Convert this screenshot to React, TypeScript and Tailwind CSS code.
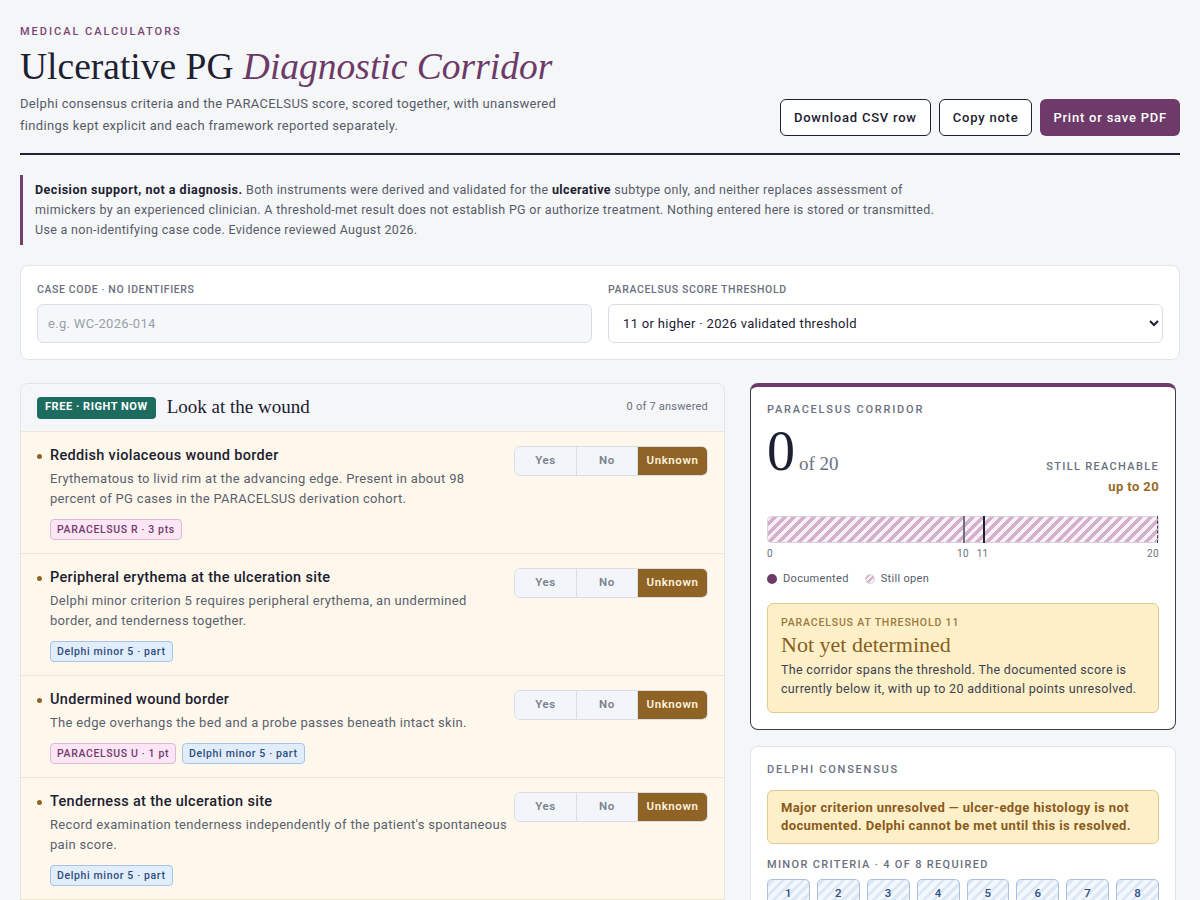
import React, { useState } from 'react';

type Answer = 'yes' | 'no' | 'unknown';

interface Tag {
  label: string;
  kind: 'para' | 'delphi';
}

interface Finding {
  id: string;
  title: string;
  desc: string;
  tags: Tag[];
}

const findings: Finding[] = [
  {
    id: 'border',
    title: 'Reddish violaceous wound border',
    desc: 'Erythematous to livid rim at the advancing edge. Present in about 98 percent of PG cases in the PARACELSUS derivation cohort.',
    tags: [{ label: 'PARACELSUS R · 3 pts', kind: 'para' }],
  },
  {
    id: 'erythema',
    title: 'Peripheral erythema at the ulceration site',
    desc: 'Delphi minor criterion 5 requires peripheral erythema, an undermined border, and tenderness together.',
    tags: [{ label: 'Delphi minor 5 · part', kind: 'delphi' }],
  },
  {
    id: 'undermined',
    title: 'Undermined wound border',
    desc: 'The edge overhangs the bed and a probe passes beneath intact skin.',
    tags: [
      { label: 'PARACELSUS U · 1 pt', kind: 'para' },
      { label: 'Delphi minor 5 · part', kind: 'delphi' },
    ],
  },
  {
    id: 'tenderness',
    title: 'Tenderness at the ulceration site',
    desc: "Record examination tenderness independently of the patient's spontaneous pain score.",
    tags: [{ label: 'Delphi minor 5 · part', kind: 'delphi' }],
  },
  {
    id: 'multiple',
    title: 'Multiple ulcerations',
    desc: 'At least two separate ulcers, on any site, at the time of assessment.',
    tags: [{ label: 'Delphi minor 7', kind: 'delphi' }],
  },
  {
    id: 'cribriform',
    title: 'Cribriform or wrinkled-paper scars',
    desc: 'Scarring at sites of healed ulcers, typically with a sieve-like pattern.',
    tags: [{ label: 'Delphi minor 8', kind: 'delphi' }],
  },
  {
    id: 'papule',
    title: 'Began as a papule, pustule or vesicle',
    desc: 'Ask how the lesion first looked before it broke down.',
    tags: [{ label: 'Delphi minor 2', kind: 'delphi' }],
  },
];

const sans = "font-['Roboto',sans-serif]";
const serif = "font-['Liberation_Serif',serif]";

const TagChip: React.FC<{ tag: Tag }> = ({ tag }) => (
  <span
    className={`inline-flex h-[21px] items-center rounded-[4px] border px-[6px] text-[10.5px] font-medium tracking-[0.06em] ${
      tag.kind === 'para'
        ? 'border-[#e2b6d8] bg-[#fbe6f6] text-[#763a6c]'
        : 'border-[#a9c3e6] bg-[#e2edfb] text-[#2c4c7e]'
    }`}
  >
    {tag.label}
  </span>
);

const Segmented: React.FC<{ value: Answer; onChange: (a: Answer) => void }> = ({ value, onChange }) => {
  const opts: { key: Answer; label: string; w: string }[] = [
    { key: 'yes', label: 'Yes', w: 'w-[61px]' },
    { key: 'no', label: 'No', w: 'w-[61px]' },
    { key: 'unknown', label: 'Unknown', w: 'w-[70px]' },
  ];
  return (
    <div className="flex h-[30px] shrink-0 overflow-hidden rounded-[6px] border border-[#d9dee6]">
      {opts.map((o, i) => (
        <button
          key={o.key}
          onClick={() => onChange(o.key)}
          className={`${o.w} text-[11.5px] font-semibold tracking-[0.05em] ${i > 0 ? 'border-l border-[#d9dee6]' : ''} ${
            value === o.key ? 'bg-[#8e6325] text-[#fdf1dc]' : 'bg-[#f2f5f9] text-[#7b818d]'
          }`}
        >
          {o.label}
        </button>
      ))}
    </div>
  );
};

export default function App() {
  const [answers, setAnswers] = useState<Record<string, Answer>>(
    Object.fromEntries(findings.map((f) => [f.id, 'unknown' as Answer]))
  );
  const answered = Object.values(answers).filter((a) => a !== 'unknown').length;

  return (
    <div className={`min-h-screen bg-[#f5f6f8] px-5 pb-10 pt-6 tracking-[0.02em] text-[#1c2030] ${sans}`}>
      {/* Header */}
      <header className="flex items-end justify-between border-b-2 border-[#1f2333] pb-4">
        <div>
          <div className="text-[11px] font-medium uppercase leading-4 tracking-[0.18em] text-[#7a4474]">
            Medical calculators
          </div>
          <h1 className={`mt-[3px] text-[37.5px] leading-[48px] tracking-normal text-[#1c2030] ${serif}`}>
            Ulcerative PG <em className="text-[#6c3a67]">Diagnostic Corridor</em>
          </h1>
          <p className="mt-[2px] max-w-[575px] text-[13px] leading-[22px] text-[#555b68]">
            Delphi consensus criteria and the PARACELSUS score, scored together, with unanswered findings kept
            explicit and each framework reported separately.
          </p>
        </div>
        <div className="flex gap-2 pb-[1px]">
          <button className="h-[37px] rounded-[6px] border border-[#1c2030] bg-white px-[13px] text-[13px] font-medium tracking-[0.06em]">
            Download CSV row
          </button>
          <button className="h-[37px] rounded-[6px] border border-[#1c2030] bg-white px-[13px] text-[13px] font-medium tracking-[0.06em]">
            Copy note
          </button>
          <button className="h-[37px] rounded-[6px] bg-[#6e3a69] px-[13px] text-[13px] font-medium tracking-[0.06em] text-white">
            Print or save PDF
          </button>
        </div>
      </header>

      {/* Disclaimer */}
      <div className="mt-5 border-l-[3px] border-[#74406e] py-[5px] pl-[12px]">
        <p className="max-w-[900px] text-[12.5px] leading-5 text-[#555b68]">
          <strong className="font-bold tracking-[0.04em] text-[#1c2030]">Decision support, not a diagnosis.</strong>{' '}
          Both instruments were derived and validated for the{' '}
          <strong className="font-bold tracking-[0.03em] text-[#1c2030]">ulcerative</strong> subtype only, and neither
          replaces assessment of mimickers by an experienced clinician. A threshold-met result does not establish PG or
          authorize treatment. Nothing entered here is stored or transmitted. Use a non-identifying case code.
          Evidence reviewed August 2026.
        </p>
      </div>

      {/* Case inputs */}
      <section className="mt-5 grid grid-cols-2 gap-4 rounded-[8px] border border-[#e1e4ea] bg-white px-4 pb-4 pt-[17px]">
        <label className="block">
          <span className="block text-[10.5px] font-medium uppercase leading-[14px] tracking-[0.06em] text-[#6b7080]">
            Case code · no identifiers
          </span>
          <input
            placeholder="e.g. WC-2026-014"
            className="mt-[7px] h-[39px] w-full rounded-[6px] border border-[#d9dee6] bg-[#f5f7fa] px-[10px] text-[13px] text-[#1c2030] placeholder-[#9a9fa9] outline-none"
          />
        </label>
        <label className="block">
          <span className="block text-[10.5px] font-medium uppercase leading-[14px] tracking-[0.06em] text-[#6b7080]">
            PARACELSUS score threshold
          </span>
          <select className="mt-[7px] h-[39px] w-full rounded-[6px] border border-[#d9dee6] bg-white px-[10px] text-[13px] text-[#1c2030] outline-none">
            <option>11 or higher · 2026 validated threshold</option>
            <option>10 or higher · original derivation threshold</option>
          </select>
        </label>
      </section>

      {/* Main grid */}
      <div className="mt-[23px] flex items-start gap-[25px]">
        {/* Findings */}
        <section className="w-[705px] overflow-hidden rounded-[8px] border border-[#e1e4ea] bg-[#fef8ec]">
          <div className="flex h-[48px] items-center justify-between border-b border-[#efe6d2] bg-[#f4f6f9] px-4">
            <div className="flex items-center gap-[11px]">
              <span className="flex h-[22px] items-center rounded-[4px] bg-[#1e6c60] px-[8px] text-[11px] font-bold tracking-[0.05em] text-white">
                FREE · RIGHT NOW
              </span>
              <h2 className={`text-[19px] tracking-normal text-[#1c2030] ${serif}`}>Look at the wound</h2>
            </div>
            <span className="text-[11px] tracking-[0.02em] text-[#6b7080]">{answered} of 7 answered</span>
          </div>

          {findings.map((f, idx) => (
            <div
              key={f.id}
              className={`flex items-start gap-[4px] px-4 pb-[13px] pt-[14px] ${idx > 0 ? 'border-t border-[#efe6d2]' : ''}`}
            >
              <div className="flex min-w-0 flex-1 gap-2">
                <span className="mt-[8px] h-[5px] w-[5px] shrink-0 rounded-full bg-[#8e6325]" />
                <div className="min-w-0">
                  <h3 className="text-[14.5px] font-medium leading-[20px] text-[#1c2030]">{f.title}</h3>
                  <p className="mt-[3px] text-[13px] leading-5 text-[#5a606c]">{f.desc}</p>
                  <div className="mt-[10px] flex gap-[6px]">
                    {f.tags.map((t) => (
                      <TagChip key={t.label} tag={t} />
                    ))}
                  </div>
                </div>
              </div>
              <Segmented
                value={answers[f.id]}
                onChange={(a) => setAnswers((prev) => ({ ...prev, [f.id]: a }))}
              />
            </div>
          ))}
        </section>

        {/* Results column */}
        <aside className="flex w-[426px] flex-col gap-4">
          <section className="rounded-[8px] border border-t-4 border-[#3b3e4a] border-t-[#6e3a69] bg-white px-4 pb-4 pt-4">
            <div className="text-[11px] font-medium uppercase leading-[14px] tracking-[0.16em] text-[#6b7080]">
              PARACELSUS corridor
            </div>
            <div className="mt-[4px] flex items-start justify-between">
              <div className="flex items-baseline gap-[4px] tracking-normal">
                <span className={`text-[56px] leading-[60px] text-[#1c2030] ${serif}`}>0</span>
                <span className={`text-[19px] text-[#6b7080] ${serif}`}>of 20</span>
              </div>
              <div className="mt-[39px] text-right">
                <div className="text-[11px] font-medium uppercase leading-[14px] tracking-[0.12em] text-[#6b7080]">
                  Still reachable
                </div>
                <div className="mt-[4px] text-[13px] font-bold leading-[18px] tracking-[0.03em] text-[#9a6b22]">
                  up to 20
                </div>
              </div>
            </div>

            <div className="relative mt-[20px] h-[27px] rounded-[4px] border border-[#d9d2dc] bg-[repeating-linear-gradient(-45deg,#d4b0cc_0px,#d4b0cc_3.5px,#f8f2f8_3.5px,#f8f2f8_7px)]">
              <span className="absolute -top-px bottom-[-1px] left-1/2 w-[2px] bg-[#6e717c]" />
              <span className="absolute -top-px bottom-[-1px] left-[55%] w-[2px] bg-[#1c2030]" />
              <span className="absolute -top-px bottom-[-1px] right-0 border-r border-dashed border-[#3b3e4a]" />
            </div>
            <div className="relative mt-[4px] h-[14px] text-[10px] leading-[14px] text-[#6b7080]">
              <span className="absolute left-0">0</span>
              <span className="absolute left-1/2 -translate-x-1/2">10</span>
              <span className="absolute left-[55%] -translate-x-1/2">11</span>
              <span className="absolute right-0">20</span>
            </div>

            <div className="mt-[10px] flex items-center gap-4 text-[11px] text-[#555b68]">
              <span className="flex items-center gap-[6px]">
                <span className="h-[10px] w-[10px] rounded-full bg-[#6e3a69]" />
                Documented
              </span>
              <span className="flex items-center gap-[6px]">
                <span className="h-[10px] w-[10px] rounded-full border border-[#e0cdda] bg-[repeating-linear-gradient(-45deg,#d4b0cc_0px,#d4b0cc_2px,#f8f2f8_2px,#f8f2f8_4px)]" />
                Still open
              </span>
            </div>

            <div className="mt-[15px] rounded-[6px] border border-[#e2c98e] bg-[#fdefc8] px-[13px] pb-[14px] pt-[11px]">
              <div className="text-[10.5px] font-medium uppercase tracking-[0.08em] text-[#9b7a3e]">
                PARACELSUS at threshold 11
              </div>
              <div className={`mt-[2px] text-[22px] leading-[26px] tracking-normal text-[#8a5e20] ${serif}`}>
                Not yet determined
              </div>
              <p className="mt-[2px] text-[12.5px] leading-[19px] text-[#3e4250]">
                The corridor spans the threshold. The documented score is currently below it, with up to 20
                additional points unresolved.
              </p>
            </div>
          </section>

          <section className="rounded-[8px] border border-[#e1e4ea] bg-white px-4 pb-4 pt-4">
            <div className="text-[11px] font-medium uppercase leading-[14px] tracking-[0.16em] text-[#6b7080]">
              Delphi consensus
            </div>
            <div className="mt-[13px] rounded-[6px] border border-[#e2c98e] bg-[#fdefc8] px-[13px] py-[8px] text-[13px] font-bold leading-[18px] tracking-[0.03em] text-[#8a5a1d]">
              Major criterion unresolved — ulcer-edge histology is not documented. Delphi cannot be met until this is
              resolved.
            </div>
            <div className="mt-[14px] text-[11px] font-medium uppercase leading-[14px] tracking-[0.12em] text-[#6b7080]">
              Minor criteria · 4 of 8 required
            </div>
            <div className="mt-[7px] grid grid-cols-8 gap-[7px]">
              {[1, 2, 3, 4, 5, 6, 7, 8].map((n) => (
                <div
                  key={n}
                  className="flex h-[28px] items-center justify-center rounded-[5px] border border-[#a9c0e2] bg-[repeating-linear-gradient(-45deg,#dde8f7_0px,#dde8f7_3px,#f4f8fd_3px,#f4f8fd_7px)] text-[11.5px] font-medium text-[#2d4f86]"
                >
                  {n}
                </div>
              ))}
            </div>
            <p className="mt-[12px] text-[12px] leading-[18px] text-[#5a606c]">
              0 documented, 8 unresolved. Answer the findings on the left to narrow the count.
            </p>
          </section>
        </aside>
      </div>
    </div>
  );
}
